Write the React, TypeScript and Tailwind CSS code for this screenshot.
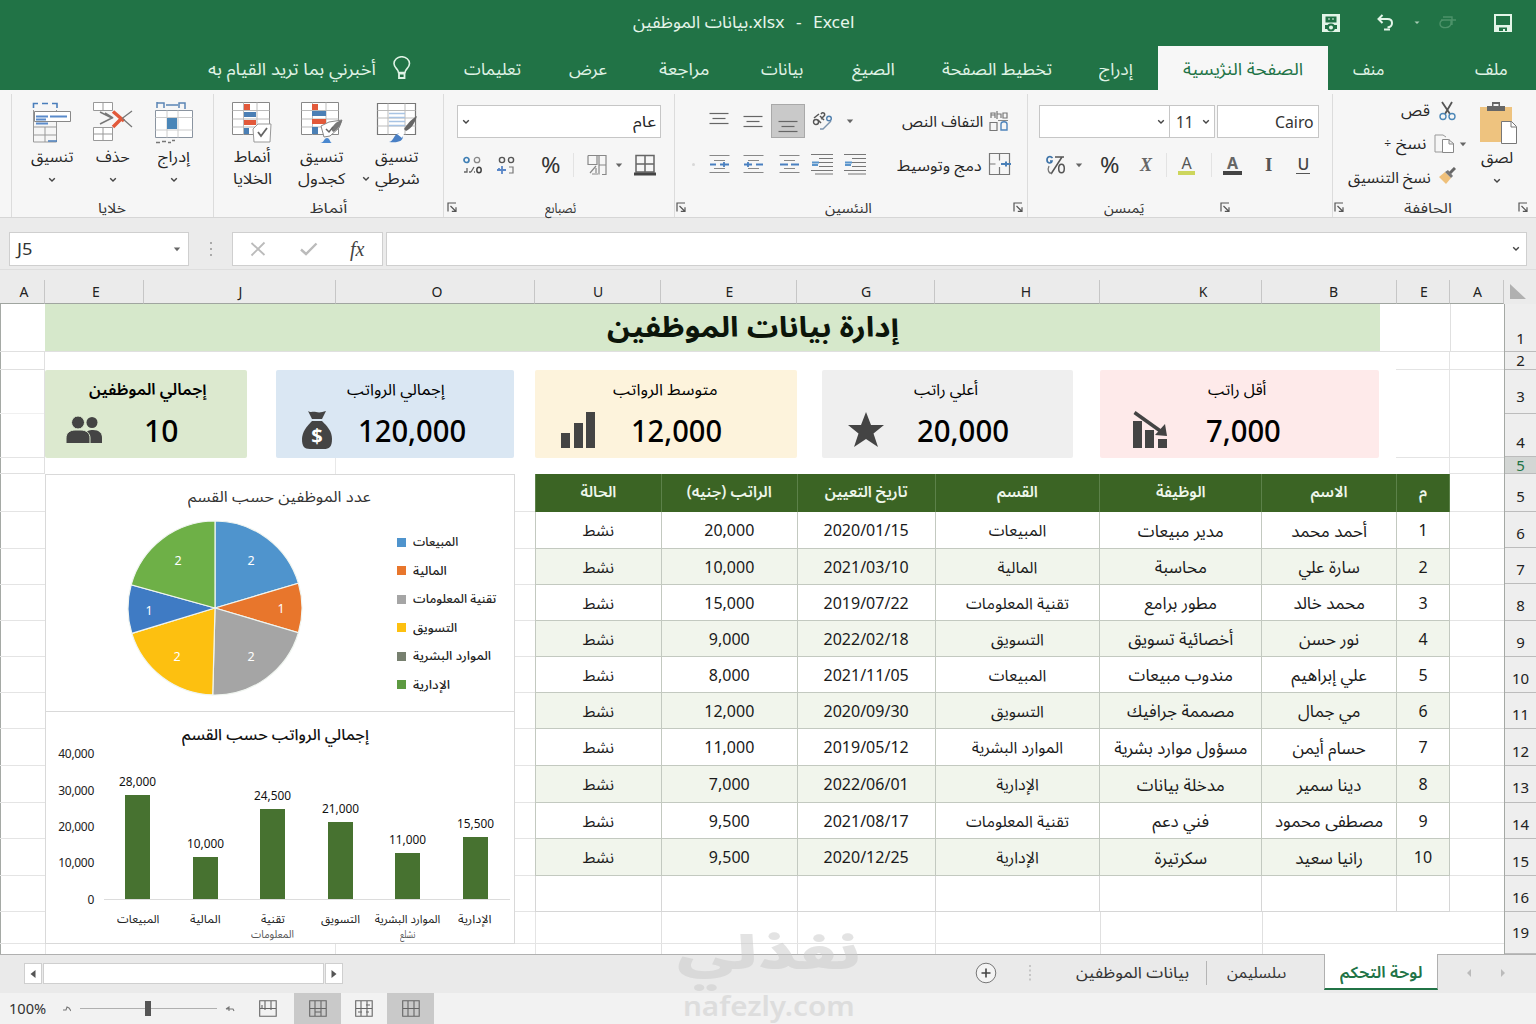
import { useLayoutEffect, useRef, useState } from 'react';
import type { ReactNode } from 'react';
import clsx from 'clsx';

// Stretches or squeezes a single line of text to the width of its box
const FitText = ({ children, className }: { children: ReactNode; className: string }) => {
  const box = useRef<HTMLDivElement>(null);
  const line = useRef<HTMLSpanElement>(null);
  const [scale, setScale] = useState(1);

  useLayoutEffect(() => {
    if (box.current && line.current) {
      setScale(box.current.clientWidth / line.current.offsetWidth);
    }
  }, [children]);

  return (
    <div ref={box} className={clsx('flex shrink-0 items-center whitespace-nowrap leading-none', className)}>
      <span ref={line} className="origin-left" style={{ transform: `scaleX(${scale})` }}>
        {children}
      </span>
    </div>
  );
};

const Svg = ({ w, h, children, className }: { w: number; h: number; children: ReactNode; className?: string }) => (
  <svg width={w} height={h} viewBox={`0 0 ${w} ${h}`} fill="none" className={clsx('shrink-0', className)}>
    {children}
  </svg>
);

const Chevron = ({ className }: { className?: string }) => (
  <Svg w={8} h={6} className={className}>
    <path d="M1.2 1.2 4 4 6.8 1.2" stroke="#444" strokeWidth="1.4" />
  </Svg>
);

const Caret = ({ className }: { className?: string }) => (
  <Svg w={8} h={5} className={className}>
    <path d="M.8.6h6.4L4 4.2z" fill="#666" />
  </Svg>
);

const Launcher = () => (
  <Svg w={11} h={11}>
    <path d="M1 9.5V1h8M3.5 4l5 5M9 5.2V9.4H4.8" stroke="#555" strokeWidth="1.2" />
  </Svg>
);

/* ---------- Title bar ---------- */

const TitleBar = () => (
  <div className="flex h-[46px] items-center">
    <div className="w-[633px]" />
    <FitText className="mt-[-4px] w-[222px] text-[17px] text-[#e6f5ea]">
      <span>بيانات الموظفين</span>
      <span>.xlsx</span>
      <span className="px-[11px]">-</span>
      <span>Excel</span>
    </FitText>
    <Svg w={20} h={20} className="ml-[466px]">
      <path d="M1 1h18v18H1z" fill="#e3f5e8" />
      <path d="M4.5 3.5h11v6h-11zM4 12h3v4H4zM13 12h3v4h-3z" fill="#217346" />
      <circle cx="10" cy="14.5" r="3" fill="#e3f5e8" stroke="#217346" strokeWidth="2" />
      <path d="M7 6h2M11 6h2" stroke="#e3f5e8" />
    </Svg>
    <Svg w={20} h={18} className="ml-[35px]">
      <path d="M6.5 1 2.5 5l4 4M3 5h8.500c6 0 6 8 0 8.500" stroke="#e3f5e8" strokeWidth="2" />
      <path d="M8 15.500h6" stroke="#e3f5e8" strokeWidth="2" />
    </Svg>
    <Svg w={6} h={4} className="ml-[18px]">
      <path d="M.5.5h5L3 3z" fill="#a9cdb5" />
    </Svg>
    <Svg w={18} h={16} className="ml-[18px]">
      <path d="M3 5h10v3c0 6-11 6-11 1 0-3 2-4 4-4M5 2h9v8M13 5h5" stroke="#4c9269" strokeWidth="1.4" />
    </Svg>
    <Svg w={20} h={20} className="ml-[37px]">
      <path d="M1 1h18v18H1z" fill="#e3f5e8" />
      <path d="M3 3h14v9H3zM6 14.5h8V18h-2v-2h-2v2H6z" fill="#217346" />
    </Svg>
  </div>
);

const TabBar = () => (
  <div className="flex h-[44px] items-center text-[17px] text-[#e0f3e6]">
    <FitText className="ml-[208px] w-[168px]">أخبرني بما تريد القيام به</FitText>
    <Svg w={20} h={24} className="ml-[16px]">
      <path d="M6.500 16.500c0-3.500-4.500-4.500-4.500-9a7.700 6.700 0 0 1 15.500 0c0 4.500-4.500 5.500-4.500 9z" stroke="#e0f3e6" strokeWidth="1.600" />
      <path d="M7 17.500h5.500v4.500H7z" stroke="#e0f3e6" strokeWidth="1.800" />
    </Svg>
    <FitText className="ml-[52px] w-[57px]">تعليمات</FitText>
    <FitText className="ml-[48px] w-[38px]">عرض</FitText>
    <FitText className="ml-[52px] w-[50px]">مراجعة</FitText>
    <FitText className="ml-[52px] w-[42px]">بيانات</FitText>
    <FitText className="ml-[49px] w-[43px]">الصيغ</FitText>
    <FitText className="ml-[47px] w-[110px]">تخطيط الصفحة</FitText>
    <FitText className="ml-[47px] w-[34px]">إدراج</FitText>
    <div className="ml-[25px] flex h-full w-[170px] items-center justify-center bg-[#f7f7f7] text-[#217346]">
      <FitText className="w-[120px]">الصفحة النژيسية</FitText>
    </div>
    <FitText className="ml-[25px] w-[31px]">منف</FitText>
    <FitText className="ml-[91px] w-[33px]">ملف</FitText>
  </div>
);

/* ---------- Ribbon ---------- */

const FormatCellsIcon = () => (
  <Svg w={40} h={42}>
    <path d="M1.500 9v32h23V9M1.500 26h23M1.500 34h23M13 26v15" stroke="#999" />
    <path d="M1.500 7V2.500H6M10 2.500h6M20 2.500h5V7M16 40h9" stroke="#4a7ebb" strokeWidth="1.600" />
    <path d="M2.500 10.500h36v10h-36z" fill="#fff" stroke="#888" />
    <path d="M4 15.500h12M4 18.500h10M4 22.500h12M18 15.500h17" stroke="#5b8bcb" strokeWidth="2" />
  </Svg>
);

const DeleteCellsIcon = () => (
  <Svg w={42} h={42}>
    <path d="M1.500 1.500h19v8h-19zM11 1.500v8M1.500 26.500h19v13h-19zM11 26.500v13M1.500 33h19" stroke="#999" fill="#fff" />
    <path d="m8 11 12 6-12 6M13 12l8 5" stroke="#777" strokeWidth="1.500" />
    <path d="M21 10.500 32 20M21 26l9-9" stroke="#e2593a" strokeWidth="3.500" />
    <path d="M30 17.500 40 10M31 18l9 8" stroke="#777" strokeWidth="1.300" />
  </Svg>
);

const InsertCellsIcon = () => (
  <Svg w={40} h={43}>
    <path d="M3 1v6M3 2h7v5M25 7V2h6v6M12 4h12" stroke="#5b85b5" strokeWidth="1.500" />
    <path d="M1.500 9.500h37v27h-37z" fill="#fff" stroke="#8a94a0" />
    <path d="M1.500 16.500h37M1.500 29h37M13 9.500v27M24 9.500v27" stroke="#ccc" />
    <path d="M13 17h10v11H13z" fill="#4a86b8" />
    <path d="M2 41.500h4M8 40.500h4M14 41.500h3M18 39.500h3" stroke="#777" strokeWidth="1.300" />
  </Svg>
);

const CellStylesIcon = () => (
  <Svg w={42} h={43}>
    <path d="M1.500 1.500h37v32h-37z" fill="#fff" stroke="#888" />
    <path d="M1.500 9.500h37M1.500 18h37M1.500 26h37M12.500 1.500v32M26 1.500v32" stroke="#bbb" />
    <path d="M13 3h6v6h-6zM13 19h12v5H13z" fill="#e2593a" />
    <path d="M13 11h12v5H13zM13 27h5v6h-5z" fill="#4a7fb5" />
    <path d="M22 28l5-5h13l-1 18H23z" fill="#fff" stroke="#999" />
    <path d="m27 31 3 4 6-8" stroke="#666" strokeWidth="1.800" />
  </Svg>
);

const TableFormatIcon = () => (
  <Svg w={43} h={43}>
    <path d="M1.500 1.500h37v32h-37z" fill="#fff" stroke="#888" />
    <path d="M1.500 9.500h37M1.500 18h37M1.500 26h37M12.500 1.500v32M26 1.500v32" stroke="#bbb" />
    <path d="M12 3h6v6h-6zM12 18h14v5H12z" fill="#e2593a" />
    <path d="M12 10h14v5H12zM12 26h6v7h-6z" fill="#4a7fb5" />
    <path d="m21 25 8-4 13-2-3 8-9 8-6 1z" fill="#fff" stroke="#888" />
    <path d="M42 19c-5 1-8 4-11 9l2 3c4-2 8-6 9-12z" fill="#777" />
    <path d="m26 28 3 3 4-5" stroke="#666" strokeWidth="1.500" />
    <path d="M20 42c4 0 4-5 7-5s3 5 5 5z" fill="#4a88d0" />
  </Svg>
);

const ConditionalIcon = () => (
  <Svg w={42} h={43}>
    <path d="M1.500 2.500h38v31h-38z" fill="#fff" stroke="#777" strokeWidth="1.200" />
    <path d="M1.500 9.500h38M1.500 17h38M1.500 25h38M12 2.500v31M29 2.500v31" stroke="#bbb" />
    <path d="M13 12.500h16M13 16.500h16M13 20.500h16M13 24.500h16" stroke="#a8c4e4" strokeWidth="1.500" />
    <path d="M41 15c-7 4-10 9-13 13l2 2c5-2 9-8 11-15z" fill="#666" />
    <path d="M13 41c5-1 4-7 10-9l4 3c0 5-4 7-14 6z" fill="#4a80c5" />
    <path d="m21 33 5-2 2 2-2 4z" fill="#fff" />
  </Svg>
);

const BigButton = ({ icon, className, lines, caret }: { icon: ReactNode; className: string; lines: ReactNode; caret?: boolean }) => (
  <div className={clsx('flex flex-col items-center', className)}>
    <div className="flex h-[43px] items-start">{icon}</div>
    <div className="flex flex-col items-center pt-[2px] text-[15.500px] text-[#262626] [&>*]:h-[22px]">{lines}</div>
    {caret && <Chevron className="mt-[9px]" />}
  </div>
);

// Bottom strip of a ribbon group: caption in the middle, launcher where there is one
const GroupFooter = ({ children }: { children: ReactNode }) => (
  <div className="flex h-[20px] items-center pt-px text-[14px] text-[#333]">{children}</div>
);

const HLines = ({ y, widths }: { y: number[]; widths: number[] }) => (
  <Svg w={20} h={24}>
    {y.map((top, i) => (
      <path key={top} d={`M${(20 - widths[i]) / 2} ${top + 0.5}h${widths[i]}`} stroke="#666" strokeWidth="1.200" />
    ))}
  </Svg>
);

const IndentIcon = ({ kind }: { kind: 'in' | 'out' | 'mid' }) => (
  <Svg w={21} h={20}>
    <path d="M.5 1.500h20M5 6.500h11M5 14.500h11M.5 18.500h20" stroke="#888" strokeWidth="1.200" />
    {kind === 'in' && <path d="M1 10.500h6M11 10.500h9M15 8v5" stroke="#4a80c0" strokeWidth="1.800" />}
    {kind === 'out' && <path d="M1 10.500h8M13 10.500h7M5 8v5" stroke="#4a80c0" strokeWidth="1.800" />}
    {kind === 'mid' && <path d="M1 10.500h8M12 10.500h8" stroke="#4a80c0" strokeWidth="1.800" />}
  </Svg>
);

const ParagraphIcon = () => (
  <Svg w={22} h={22}>
    <path d="M0 1.500h22M8 5.500h14M8 9.500h14M8 13.500h14M0 17.500h22M4 21h18" stroke="#777" strokeWidth="1.200" />
    <path d="M1 9.500h7M1 12h6" stroke="#5b95cc" strokeWidth="2" />
  </Svg>
);

const Divider = ({ className }: { className?: string }) => <div className={clsx('h-[24px] w-px bg-[#e3e3e3]', className)} />;

const CellsGroup = () => (
  <div className="ml-[11px] flex w-[202px] flex-col border-l border-[#dcdcdc]">
    <div className="flex h-[103px] pt-[7px] pl-[9px]">
      <BigButton icon={<FormatCellsIcon />} className="w-[61px]" caret lines={<FitText className="w-[42px]">تنسيق</FitText>} />
      <BigButton icon={<DeleteCellsIcon />} className="w-[61px]" caret lines={<FitText className="w-[34px]">حذف</FitText>} />
      <BigButton icon={<InsertCellsIcon />} className="w-[61px]" caret lines={<FitText className="w-[32px]">إدراج</FitText>} />
    </div>
    <GroupFooter>
      <FitText className="ml-[86px] w-[28px]">خلايا</FitText>
    </GroupFooter>
  </div>
);

const StylesGroup = () => (
  <div className="flex w-[230px] flex-col border-l border-[#dcdcdc]">
    <div className="flex h-[103px] pt-[7px] pl-[3px]">
      <BigButton
        icon={<CellStylesIcon />}
        className="w-[70px]"
        lines={
          <>
            <FitText className="w-[37px]">أنماط</FitText>
            <FitText className="w-[39px]">الخلايا</FitText>
          </>
        }
      />
      <BigButton
        icon={<TableFormatIcon />}
        className="w-[69px]"
        lines={
          <>
            <FitText className="w-[43px]">تنسيق</FitText>
            <FitText className="w-[47px]">كجدول</FitText>
          </>
        }
      />
      <BigButton
        icon={<ConditionalIcon />}
        className="w-[81px]"
        lines={
          <>
            <FitText className="w-[43px]">تنسيق</FitText>
            <div className="-ml-[12px] flex items-center gap-[5px]">
              <Chevron />
              <FitText className="w-[45px]">شرطي</FitText>
            </div>
          </>
        }
      />
    </div>
    <GroupFooter>
      <FitText className="ml-[96px] w-[37px]">أنماظ</FitText>
    </GroupFooter>
  </div>
);

const NumberGroup = () => (
  <div className="flex w-[231px] flex-col border-l border-[#dcdcdc]">
    <div className="flex h-[103px] flex-col pt-[11px] pl-[13px]">
      <div className="flex h-[33px] w-[204px] items-center justify-between border border-[#c6c6c6] bg-white px-[4px]">
        <Chevron />
        <FitText className="w-[23px] text-[15px]">عام</FitText>
      </div>
      <div className="mt-[15px] flex h-[24px] items-center">
        <Svg w={20} h={20} className="ml-[6px]">
          <circle cx="3.500" cy="5" r="2.500" stroke="#3f7fb5" strokeWidth="1.700" />
          <circle cx="14" cy="5" r="2.700" stroke="#888" strokeWidth="1.300" />
          <path d="M1 17h3V13M6 17h2M8 17l3-5M11 17h1" stroke="#666" strokeWidth="1.300" />
          <ellipse cx="16" cy="15" rx="2.200" ry="2.800" stroke="#444" strokeWidth="1.500" />
        </Svg>
        <Svg w={20} h={20} className="ml-[13px]">
          <circle cx="6" cy="5" r="2.600" stroke="#555" strokeWidth="1.400" />
          <circle cx="15" cy="5" r="2.600" stroke="#555" strokeWidth="1.400" />
          <path d="M1 15h9M6 11v8M3 13v3" stroke="#5a87c8" strokeWidth="1.800" />
          <path d="M13 12h4v6h-4" stroke="#777" strokeWidth="1.200" />
        </Svg>
        <FitText className="ml-[25px] w-[19px] text-[21px] text-[#333]">%</FitText>
        <Divider className="ml-[13px]" />
        <Svg w={20} h={22} className="ml-[13px]">
          <path d="M1 1.500h18v19h-4M1 1.500v9h9v-9M12 1.500v19M12 11h7M9 12 3 19M9 19v-5M5 20h6" stroke="#888" strokeWidth="1.200" />
        </Svg>
        <Caret className="ml-[8px]" />
        <Svg w={22} h={22} className="ml-[11px]">
          <path d="M2 1.500h18V18H2zM11 1.500V18M2 10h18" stroke="#666" strokeWidth="1.500" />
          <path d="M0 20h22" stroke="#444" strokeWidth="3" />
        </Svg>
      </div>
    </div>
    <GroupFooter>
      <div className="ml-[3px]">
        <Launcher />
      </div>
      <FitText className="ml-[87px] w-[31px]">ئصباىع</FitText>
    </GroupFooter>
  </div>
);

const AlignmentGroup = () => (
  <div className="flex w-[353px] flex-col border-l border-[#dcdcdc]">
    <div className="flex h-[103px] flex-col pt-[10px]">
      <div className="flex h-[34px] items-center">
        <div className="ml-[34px]">
          <HLines y={[4, 9, 14]} widths={[19, 13, 19]} />
        </div>
        <div className="mt-[6px] ml-[14px]">
          <HLines y={[4, 9, 14]} widths={[19, 13, 19]} />
        </div>
        <div className="ml-[8px] flex h-[34px] w-[34px] items-end justify-center border border-[#a9a9a9] bg-[#c9c9c9]">
          <HLines y={[8, 13, 18]} widths={[19, 13, 19]} />
        </div>
        <Svg w={22} h={22} className="ml-[7px]">
          <circle cx="4" cy="12" r="2.500" stroke="#555" strokeWidth="1.400" />
          <path d="M6 10l3 3M8 6l4 4M9 4c2-3 5 0 3 2L9 9M2 8l5-4" stroke="#555" strokeWidth="1.500" />
          <circle cx="17" cy="8.500" r="2.300" stroke="#4f7fae" strokeWidth="1.400" />
          <path d="M19 11 11 19H8" stroke="#7b93ad" strokeWidth="1.400" />
        </Svg>
        <Caret className="ml-[12px]" />
        <FitText className="ml-[48px] w-[81px] pt-px text-[15px]">التفاف النص</FitText>
        <Svg w={20} h={22} className="ml-[6px]">
          <path d="M2 8V3h4v5M2 5h4M8 9V1M8 4h4v4M14 3h4v5h-4zM1 12.500h7v8H1z" stroke="#777" strokeWidth="1.200" />
          <path d="M12 20v-6c0-3 6-3 6 0v6z" stroke="#4f84bb" strokeWidth="1.400" />
          <path d="M9 10.500h10" stroke="#888" />
        </Svg>
      </div>
      <div className="mt-[11px] flex h-[30px] items-center">
        <div className="ml-[17px] size-[3px] rounded-full bg-[#d8d8d8]" />
        <div className="ml-[14px] flex gap-[13px]">
          <IndentIcon kind="in" />
          <IndentIcon kind="out" />
        </div>
        <div className="ml-[15px]">
          <IndentIcon kind="mid" />
        </div>
        <div className="ml-[11px] flex gap-[11px]">
          <ParagraphIcon />
          <ParagraphIcon />
        </div>
        <FitText className="ml-[31px] w-[85px] pt-[2px] text-[15px]">دمج وتوسيط</FitText>
        <Svg w={23} h={24} className="ml-[6px]">
          <path d="M1.500 1.500h20v21h-20zM11.500 1.500v7M11.500 15v7M1.500 12h6" stroke="#777" strokeWidth="1.200" />
          <path d="M13 12h10M18 9.500v5" stroke="#4a80b8" strokeWidth="2" />
        </Svg>
      </div>
    </div>
    <GroupFooter>
      <div className="ml-[1px]">
        <Launcher />
      </div>
      <FitText className="ml-[138px] w-[47px]">النئسين</FitText>
      <div className="ml-[141px]">
        <Launcher />
      </div>
    </GroupFooter>
  </div>
);

const FontGroup = () => (
  <div className="flex w-[305px] flex-col border-l border-[#dcdcdc]">
    <div className="flex h-[103px] flex-col pt-[11px] pl-[11px]">
      <div className="flex h-[33px] text-[16px] text-[#333]">
        <div className="flex w-[131px] items-center justify-end border border-[#c6c6c6] bg-white pr-[4px]">
          <Chevron />
        </div>
        <div className="flex w-[45px] items-center justify-between border border-l-0 border-[#c6c6c6] bg-white pr-[4px] pl-[6px]">
          <FitText className="w-[17px]">11</FitText>
          <Chevron />
        </div>
        <div className="ml-[2px] flex w-[102px] items-center justify-end border border-[#c6c6c6] bg-white pr-[4px]">
          <FitText className="w-[39px] text-[17px]">Cairo</FitText>
        </div>
      </div>
      <div className="mt-[15px] flex h-[24px] items-center">
        <Svg w={20} h={20} className="ml-[7px]">
          <path d="M6.500 3C4.500.5 1 1.500 1 5s4.500 4 5 1H4" stroke="#3f74a8" strokeWidth="1.700" />
          <path d="M16 2 5 19M9 2h9" stroke="#555" strokeWidth="1.500" />
          <ellipse cx="15.500" cy="13.500" rx="2.800" ry="4.300" stroke="#555" strokeWidth="1.500" />
          <path d="M3 11c-2 4 0 8 3 7" stroke="#777" strokeWidth="1.300" />
        </Svg>
        <Caret className="ml-[9px]" />
        <FitText className="ml-[17px] w-[19px] text-[21px] text-[#333]">%</FitText>
        <FitText className="ml-[21px] w-[12px] font-['Liberation_Serif'] text-[18px] font-bold text-[#666] italic">X</FitText>
        <Divider className="ml-[14px]" />
        <div className="ml-[11px] flex w-[17px] flex-col items-center border-b-4 border-[#cdd65c] text-[16px] leading-[16px] text-[#555]">A</div>
        <Divider className="ml-[16px]" />
        <div className="ml-[11px] flex w-[19px] flex-col items-center border-b-4 border-[#444] text-[16px] leading-[16px] font-bold text-[#666]">A</div>
        <div className="ml-[23px] font-['Liberation_Serif'] text-[19px] font-bold text-[#555]">I</div>
        <div className="ml-[24px] border-b border-[#555] px-[1px] text-[16px] leading-[17px] font-medium text-[#444]">U</div>
      </div>
    </div>
    <GroupFooter>
      <FitText className="ml-[76px] w-[40px]">يَمىسن</FitText>
      <div className="ml-[76px]">
        <Launcher />
      </div>
    </GroupFooter>
  </div>
);

const ClipboardGroup = () => (
  <div className="flex w-[204px] flex-col border-l border-[#dcdcdc]">
    <div className="flex h-[103px]">
      <div className="flex w-[134px] flex-col text-[15.500px] text-[#262626]">
        <div className="mt-[5px] flex h-[24px] items-center justify-end">
          <FitText className="w-[29px]">قص</FitText>
          <Svg w={17} h={20} className="mr-[11px] ml-[9px]">
            <path d="M3 1l8 12M13 1 6 13" stroke="#555" strokeWidth="1.800" />
            <circle cx="4" cy="15.500" r="3" stroke="#4d88b8" strokeWidth="1.400" />
            <circle cx="13" cy="15.500" r="3" stroke="#4d88b8" strokeWidth="1.400" />
          </Svg>
        </div>
        <div className="mt-[9px] flex h-[24px] items-center justify-end">
          <span className="mr-[5px] text-[12px]">÷</span>
          <FitText className="w-[30px]">نسخ</FitText>
          <Svg w={21} h={20} className="ml-[8px]">
            <path d="M9 18H1V1h8l3 2" stroke="#999" />
            <path d="M8.500 5.500h6l5 4v9h-11zM15 5v5h5" fill="#fff" stroke="#888" />
          </Svg>
          <Caret className="ml-[4px]" />
        </div>
        <div className="mt-[10px] flex h-[24px] items-center justify-end">
          <FitText className="w-[83px]">نسخ التنسيق</FitText>
          <Svg w={18} h={18} className="mr-[11px] ml-[7px] mb-[4px]">
            <path d="m1 10 6-5 6 6-5 6z" fill="#efc07a" />
            <path d="m7 5 3-2 5 6-2 2z" fill="#777" />
            <path d="m12 6 5-5" stroke="#666" strokeWidth="3" />
          </Svg>
        </div>
      </div>
      <div className="ml-[9px] flex flex-col items-center pt-[8px]">
        <Svg w={39} h={43} className="ml-[3px]">
          <path d="M1 5h32v35H1z" fill="#eec37f" />
          <path d="M8 4h5V0h8v4h5v5H8zM14.500 2v2h5V2z" fill="#666" />
          <path d="M22.500 19.500h10l5 5v17h-15z" fill="#fff" stroke="#777" />
          <path d="M32 19v6h5" stroke="#777" />
        </Svg>
        <FitText className="mt-[5px] w-[32px] text-[15.500px]">لصق</FitText>
        <Chevron className="mt-[12px]" />
      </div>
    </div>
    <GroupFooter>
      <div className="ml-[1px]">
        <Launcher />
      </div>
      <FitText className="ml-[59px] w-[48px]">الحاففة</FitText>
      <div className="ml-[66px]">
        <Launcher />
      </div>
    </GroupFooter>
  </div>
);

const Ribbon = () => (
  <div className="flex h-[128px] border-b border-[#d6d6d6] bg-[#f6f6f6] pt-[4px] text-[#262626]">
    <CellsGroup />
    <StylesGroup />
    <NumberGroup />
    <AlignmentGroup />
    <FontGroup />
    <ClipboardGroup />
  </div>
);

/* ---------- Formula bar ---------- */

const FormulaBar = () => (
  <div className="flex h-[52px] items-start border-b border-[#dedede] bg-[#ebebeb] pt-[14px]">
    <div className="ml-[9px] flex h-[34px] w-[180px] items-center justify-between border border-[#cfcfcf] bg-white px-[7px] text-[16px] text-[#333]">
      <FitText className="w-[16px]">J5</FitText>
      <Caret />
    </div>
    <Svg w={4} h={16} className="mt-[9px] ml-[20px]">
      <path d="M2 1v2M2 7v2M2 13v2" stroke="#aaa" strokeWidth="2" />
    </Svg>
    <div className="ml-[19px] flex h-[34px] w-[151px] items-center border border-[#cfcfcf] bg-white">
      <Svg w={16} h={16} className="ml-[17px]">
        <path d="m1.500 2 13 12M14.500 1.500l-13 13" stroke="#bbb" strokeWidth="1.800" />
      </Svg>
      <Svg w={18} h={14} className="ml-[34px]">
        <path d="M1 7.500 6 12 16.500 1.500" stroke="#bbb" strokeWidth="2.400" />
      </Svg>
      <span className="ml-[32px] font-['Liberation_Serif'] text-[20px] leading-none text-[#444] italic">fx</span>
    </div>
    <div className="ml-[3px] flex h-[34px] w-[1141px] items-center justify-end border border-[#cfcfcf] bg-white pr-[6px]">
      <Chevron />
    </div>
  </div>
);

const COLUMNS = [
  { name: 'A', cls: 'w-[45px] pl-[4px]' },
  { name: 'E', cls: 'w-[99px] pl-[4px]' },
  { name: 'J', cls: 'w-[192px] pl-[2px]' },
  { name: 'O', cls: 'w-[199px] pl-[4px]' },
  { name: 'U', cls: 'w-[126px] pl-[1px]' },
  { name: 'E', cls: 'w-[136px] pl-[2px]' },
  { name: 'G', cls: 'w-[138px] pl-[1px]' },
  { name: 'H', cls: 'w-[165px] pl-[18px]' },
  { name: 'K', cls: 'w-[162px] pl-[45px]' },
  { name: 'B', cls: 'w-[135px] pl-[9px]' },
  { name: 'E', cls: 'w-[53px] pl-[2px]' },
  { name: 'A', cls: 'w-[54px] pl-[2px]' },
];

const ColumnHeader = () => (
  <div className="flex h-[34px] items-end bg-[#ebebeb] text-[14px] text-[#222]">
    {COLUMNS.map((col, i) => (
      <div key={i} className={clsx('flex h-[24px] items-center justify-center border-r border-b border-r-[#c6c6c6] border-b-[#a0a5a0]', col.cls)}>
        {col.name}
      </div>
    ))}
    <Svg w={17} h={16} className="mb-[4px] ml-[6px]">
      <path d="M0 0v15h16z" fill="#b0b0b0" />
    </Svg>
  </div>
);

/* ---------- Sheet ---------- */

const ROW_HEADERS = [
  { n: '1', cls: 'h-[48px] pt-[21px]' },
  { n: '2', cls: 'h-[18px]' },
  { n: '3', cls: 'h-[44px] pt-[10px]' },
  { n: '4', cls: 'h-[43px] pt-[14px]' },
  { n: '5', cls: 'h-[17px] bg-[#d3d6d4] text-[#217346]' },
  { n: '5', cls: 'h-[38px] pt-[8px]' },
  { n: '6', cls: 'h-[36px] pt-[8px]' },
  { n: '7', cls: 'h-[36px] pt-[8px]' },
  { n: '8', cls: 'h-[37px] pt-[7px]' },
  { n: '9', cls: 'h-[36px] pt-[8px]' },
  { n: '10', cls: 'h-[36px] pt-[8px]' },
  { n: '11', cls: 'h-[36px] pt-[8px]' },
  { n: '12', cls: 'h-[37px] pt-[8px]' },
  { n: '13', cls: 'h-[37px] pt-[7px]' },
  { n: '14', cls: 'h-[36px] pt-[8px]' },
  { n: '15', cls: 'h-[37px] pt-[8px]' },
  { n: '16', cls: 'h-[36px] pt-[8px]' },
  { n: '19', cls: 'h-[42px]' },
];

const BODY_ROWS = [
  'h-[38px]',
  'h-[37px]',
  'h-[36px]',
  'h-[36px]',
  'h-[36px]',
  'h-[36px]',
  'h-[36px]',
  'h-[37px]',
  'h-[37px]',
  'h-[36px]',
  'h-[37px]',
  'h-[36px]',
  'h-[32px]',
];

const GridStrip = ({ className }: { className: string }) => (
  <div className={clsx('flex flex-col', className)}>
    {BODY_ROWS.map((h, i) => (
      <div key={i} className={clsx('border-b border-[#e4e4e4]', h)} />
    ))}
  </div>
);

const KPIS = [
  {
    label: 'إجمالي الموظفين',
    labelCls: 'w-[118px] ml-[44px] font-semibold',
    value: '10',
    valueCls: 'w-[34px] ml-[41px]',
    box: 'w-[202px] bg-[#dce9cf]',
    iconCls: 'ml-[21px]',
    icon: (
      <Svg w={37} h={30}>
        <circle cx="26" cy="7.500" r="5.500" fill="#444" />
        <path d="M19 28V20c1-4 4-5 8-5 6 0 9 3 9 8v5z" fill="#444" />
        <circle cx="12" cy="7.500" r="6.500" fill="#444" stroke="#dce9cf" />
        <path d="M0 28.500v-5.500c0-5 4-8 9-8h6c5 0 9 3 9 8v5.500z" fill="#444" stroke="#dce9cf" />
      </Svg>
    ),
  },
  {
    label: 'إجمالي الرواتب',
    labelCls: 'w-[98px] ml-[71px]',
    value: '120,000',
    valueCls: 'w-[108px] ml-[25px]',
    box: 'ml-[29px] w-[238px] bg-[#dae7f3]',
    iconCls: 'ml-[25px]',
    icon: (
      <Svg w={32} h={38}>
        <path d="M7 0c3 2 5 0 8 1 4 1 6 0 10-1l-4 8H11z" fill="#444" />
        <path d="M11 10h10c5 5 10 10 10 18s-3 10-8 10H9c-6 0-8-3-8-10S6 15 11 10z" fill="#444" />
        <text x="16" y="32" fill="#fff" fontSize="20" fontWeight="700" textAnchor="middle">
          $
        </text>
      </Svg>
    ),
  },
  {
    label: 'متوسط الرواتب',
    labelCls: 'w-[104px] ml-[78px]',
    value: '12,000',
    valueCls: 'w-[91px] ml-[35px]',
    box: 'ml-[21px] w-[262px] bg-[#fdf3dc]',
    iconCls: 'ml-[26px]',
    icon: (
      <Svg w={35} h={36}>
        <path d="M0 21h9v15H0zM13 11h9v25h-9zM25 0h9v36h-9z" fill="#444" />
      </Svg>
    ),
  },
  {
    label: 'أعلي راتب',
    labelCls: 'w-[64px] ml-[92px]',
    value: '20,000',
    valueCls: 'w-[92px] ml-[33px]',
    box: 'ml-[25px] w-[251px] bg-[#efefef]',
    iconCls: 'ml-[26px]',
    icon: (
      <Svg w={36} h={36}>
        <path d="m18 0 5 13h13L25.500 21.500 30 35l-12-8-12 8 4.500-13.500L0 13h13z" fill="#444" />
      </Svg>
    ),
  },
  {
    label: 'أقل راتب',
    labelCls: 'w-[58px] ml-[108px]',
    value: '7,000',
    valueCls: 'w-[75px] ml-[38px]',
    box: 'ml-[27px] w-[279px] bg-[#feeaea]',
    iconCls: 'ml-[32px]',
    icon: (
      <Svg w={36} h={37}>
        <path d="M1 10h9v27H1zM13 19h9v18h-9zM26 28h9v9h-9z" fill="#444" />
        <path d="m2.500 1.500 28 20" stroke="#444" strokeWidth="3.500" />
        <path d="m33 13 2 12-12-1z" fill="#444" />
      </Svg>
    ),
  },
];

const KpiRow = () => (
  <div className="flex h-[88px]">
    <div className="flex w-[45px] flex-col border-r border-[#e0e0e0]">
      <div className="h-[44px] border-b border-[#f0f0f0]" />
      <div className="h-[44px] border-b border-[#e4e4e4]" />
    </div>
    {KPIS.map((kpi) => (
      <div key={kpi.label} className={clsx('flex flex-col rounded-[2px] text-black', kpi.box)}>
        <FitText className={clsx('mt-[8px] h-[22px] text-[16px]', kpi.labelCls)}>{kpi.label}</FitText>
        <div className="mt-[8px] flex h-[43px] items-center">
          <div className={kpi.iconCls}>{kpi.icon}</div>
          <FitText className={clsx('pt-[2px] text-[30px] font-medium', kpi.valueCls)}>{kpi.value}</FitText>
        </div>
      </div>
    ))}
    <div className="ml-[17px] w-[54px] border-r border-b border-[#e4e4e4]" />
    <div className="w-[54px] border-b border-[#e4e4e4]" />
  </div>
);

/* ---------- Charts ---------- */

const SLICES = [
  { from: 0, to: 73.5, color: '#4f94cd', n: 2, x: 205, y: 90 },
  { from: 73.5, to: 106.5, color: '#e8762c', n: 1, x: 235, y: 138 },
  { from: 106.5, to: 181.5, color: '#a5a5a5', n: 2, x: 205, y: 186 },
  { from: 181.5, to: 253, color: '#fdc010', n: 2, x: 131, y: 186 },
  { from: 253, to: 285.5, color: '#3f7bc4', n: 1, x: 103, y: 140 },
  { from: 285.5, to: 360, color: '#6eb047', n: 2, x: 132, y: 90 },
];

const CX = 169;
const CY = 133;
const R = 87;

const point = (deg: number) => {
  const a = ((deg - 90) * Math.PI) / 180;
  return `${CX + R * Math.cos(a)} ${CY + R * Math.sin(a)}`;
};

const LEGEND = [
  { name: 'المبيعات', sw: 'bg-[#4f94cd]', cls: 'w-[45px]' },
  { name: 'المالية', sw: 'bg-[#e8762c]', cls: 'w-[34px]' },
  { name: 'تقنية المعلومات', sw: 'bg-[#a5a5a5]', cls: 'w-[83px]' },
  { name: 'التسويق', sw: 'bg-[#fdc010]', cls: 'w-[44px]' },
  { name: 'الموارد البشرية', sw: 'bg-[#77806f]', cls: 'w-[78px]' },
  { name: 'الإدارية', sw: 'bg-[#5d9a41]', cls: 'w-[37px]' },
];

const PieChart = () => (
  <div className="relative h-[237px] border-b border-[#d9d9d9]">
    <Svg w={300} h={236}>
      {SLICES.map((s) => (
        <path key={s.from} d={`M${CX} ${CY}L${point(s.from)}A${R} ${R} 0 0 1 ${point(s.to)}Z`} fill={s.color} stroke="#f0f5f0" strokeWidth="1.200" />
      ))}
      {SLICES.map((s) => (
        <text key={s.from} x={s.x} y={s.y} fill="#fff" fontSize="12.500" textAnchor="middle">
          {s.n}
        </text>
      ))}
    </Svg>
    <FitText className="absolute top-[10px] left-[142px] h-[22px] w-[183px] text-[15px] text-[#333]">عدد الموظفين حسب القسم</FitText>
    <div className="absolute top-[53px] left-[351px] flex flex-col">
      {LEGEND.map((item) => (
        <div key={item.name} className="flex h-[28.500px] items-center gap-[7px]">
          <div className={clsx('size-[9px]', item.sw)} />
          <FitText className={clsx('text-[12px] font-medium text-[#222]', item.cls)}>{item.name}</FitText>
        </div>
      ))}
    </div>
  </div>
);

const BARS = [
  { name: 'المبيعات', value: '28,000', bar: 'h-[104px]', cls: 'w-[42px]' },
  { name: 'المالية', value: '10,000', bar: 'h-[42px]', cls: 'w-[31px]' },
  { name: 'تقنية', value: '24,500', bar: 'h-[90px]', cls: 'w-[24px]', second: 'المعلومات', secondCls: 'w-[43px]' },
  { name: 'التسويق', value: '21,000', bar: 'h-[77px]', cls: 'w-[39px]' },
  { name: 'الموارد البشرية', value: '11,000', bar: 'h-[46px]', cls: 'w-[66px]', second: 'نشلع', secondCls: 'w-[15px]' },
  { name: 'الإدارية', value: '15,500', bar: 'h-[62px]', cls: 'w-[34px]' },
];

const TICKS = ['40,000', '30,000', '20,000', '10,000', '0'];

const BarChart = () => (
  <div className="flex h-[232px] flex-col">
    <FitText className="mt-[12px] ml-[136px] h-[22px] w-[187px] text-[15.500px] font-medium text-[#111]">إجمالي الرواتب حسب القسم</FitText>
    <div className="mt-[-10px] flex">
      <div className="flex w-[48px] flex-col items-end text-[12px] text-[#222]">
        {TICKS.map((t) => (
          <div key={t} className="flex h-[36.400px] items-center leading-none tracking-tight">
            {t}
          </div>
        ))}
      </div>
      <div className="ml-[10px] flex flex-col">
        <div className="flex h-[164px] w-[406px] items-end border-b border-[#dcdcdc]">
          {BARS.map((b) => (
            <div key={b.name} className="flex w-[67.500px] flex-col items-center text-[12.500px] text-[#111]">
              <FitText className="mb-[7px] w-[37px]">{b.value}</FitText>
              <div className={clsx('w-[25px] bg-[#477230]', b.bar)} />
            </div>
          ))}
        </div>
        <div className="flex pt-[10px]">
          {BARS.map((b) => (
            <div key={b.name} className="flex w-[67.500px] flex-col items-center text-[11.500px] text-[#222]">
              <FitText className={clsx('h-[17px]', b.cls)}>{b.name}</FitText>
              {b.second && <FitText className={clsx('h-[15px] text-[10.500px] text-[#555]', b.secondCls)}>{b.second}</FitText>}
            </div>
          ))}
        </div>
      </div>
    </div>
  </div>
);

/* ---------- Employees table ---------- */

const TABLE_COLS = ['w-[126px]', 'w-[136px]', 'w-[138px]', 'w-[165px]', 'w-[162px]', 'w-[135px]', 'w-[53px]'];

const HEAD = ['الحالة', 'الراتب (جنيه)', 'تاريخ التعيين', 'القسم', 'الوظيفة', 'الاسم', 'م'];

const EMPLOYEES = [
  ['نشط', '20,000', '2020/01/15', 'المبيعات', 'مدير مبيعات', 'أحمد محمد', '1'],
  ['نشط', '10,000', '2021/03/10', 'المالية', 'محاسبة', 'سارة علي', '2'],
  ['نشط', '15,000', '2019/07/22', 'تقنية المعلومات', 'مطور برامع', 'محمد خالد', '3'],
  ['نشط', '9,000', '2022/02/18', 'التسويق', 'أخصائية تسويق', 'نور حسن', '4'],
  ['نشط', '8,000', '2021/11/05', 'المبيعات', 'مندوب مبيعات', 'علي إبراهيم', '5'],
  ['نشط', '12,000', '2020/09/30', 'التسويق', 'مصممة جرافيك', 'مي جمال', '6'],
  ['نشط', '11,000', '2019/05/12', 'الموارد البشرية', 'مسؤول موارد بشرية', 'حسام أيمن', '7'],
  ['نشط', '7,000', '2022/06/01', 'الإدارية', 'مدخلة بيانات', 'دينا سمير', '8'],
  ['نشط', '9,500', '2021/08/17', 'تقنية المعلومات', 'فني دعم', 'مصطفى محمود', '9'],
  ['نشط', '9,500', '2020/12/25', 'الإدارية', 'سكرتيرة', 'رانيا سعيد', '10'],
];

const EmployeesTable = () => (
  <div className="flex w-[915px] flex-col">
    <div className="flex h-[38px] border-l border-[#5c8149] bg-[#3b6424]">
      {HEAD.map((h, i) => (
        <div
          key={h}
          className={clsx('flex items-center justify-center border-r border-[#5c8149] pb-[2px] text-[15.500px] leading-none font-semibold text-[#eef6ea]', TABLE_COLS[i])}
        >
          {h}
        </div>
      ))}
    </div>
    {EMPLOYEES.map((row, r) => (
      <div key={r} className={clsx('flex border-b border-l border-[#c3c9c0]', BODY_ROWS[r + 1], r % 2 === 1 ? 'bg-[#f1f5ec]' : 'bg-white')}>
        {row.map((cell, i) => (
          <div
            key={i}
            className={clsx(
              'flex items-center justify-center border-r border-[#c3c9c0] leading-none whitespace-nowrap text-[#1a1a1a]',
              i === 4 || i === 5 ? 'text-[17px]' : 'text-[16px]',
              TABLE_COLS[i],
            )}
          >
            {cell}
          </div>
        ))}
      </div>
    ))}
    <div className="flex h-[36px] border-b border-l border-[#d6d6d6]">
      {TABLE_COLS.map((w) => (
        <div key={w} className={clsx('border-r border-[#d6d6d6]', w)} />
      ))}
    </div>
    <div className="flex h-[32px] border-b border-l border-[#e4e4e4]">
      {TABLE_COLS.slice(0, 5).map((w) => (
        <div key={w} className={clsx('border-r border-[#e0e0e0]', w)} />
      ))}
    </div>
    <div className="flex flex-1 border-l border-[#e4e4e4]">
      {TABLE_COLS.slice(0, 5).map((w) => (
        <div key={w} className={clsx('border-r border-[#e0e0e0]', w)} />
      ))}
    </div>
  </div>
);

const Sheet = () => (
  <div className="flex h-[650px] bg-white">
    <div className="flex w-[1505px] flex-col border-r border-l border-[#a5a9a5]">
      {/* Banner */}
      <div className="-ml-px flex h-[48px] border-b border-[#e0e0e0]">
        <div className="w-[45px]" />
        <div className="flex w-[1335px] bg-[#d6e8cb]">
          <FitText className="ml-[562px] h-[44px] w-[292px] text-[28px] font-bold text-[#0c150a]">إدارة بيانات الموظفين</FitText>
        </div>
        <div className="w-[71px] border-r border-[#e0e0e0]" />
      </div>
      <div className="-ml-px flex h-[18px]">
        <div className="w-[45px] border-r border-b border-[#e0e0e0]" />
        <div className="w-[1352px]" />
        <div className="w-[54px] border-r border-b border-[#e4e4e4]" />
        <div className="w-[54px] border-b border-[#e4e4e4]" />
      </div>
      <div className="-ml-px">
        <KpiRow />
      </div>
      <div className="-ml-px flex h-[16px]">
        <div className="w-[45px] border-r border-b border-[#e0e0e0]" />
        <div className="w-[291px] border-r border-[#e8e8e8]" />
        <div className="w-[1115px] border-r border-[#e4e4e4]" />
        <div className="w-[54px] border-b border-[#e4e4e4]" />
      </div>
      <div className="-ml-px flex flex-1">
        <GridStrip className="w-[45px]" />
        <div className="flex w-[470px] flex-col">
          <div className="h-[470px] border border-[#d9d9d9]">
            <PieChart />
            <BarChart />
          </div>
          <div className="flex flex-1">
            <div className="w-[291px] border-r border-l border-[#e4e4e4]" />
          </div>
        </div>
        <GridStrip className="w-[20px]" />
        <EmployeesTable />
        <GridStrip className="w-[54px]" />
      </div>
    </div>
    <div className="flex w-[31px] flex-col bg-[#eeeeee] text-[15px] text-[#222]">
      {ROW_HEADERS.map((row, i) => (
        <div key={i} className={clsx('flex shrink-0 items-center justify-center border-b border-[#bcbcbc] leading-none', row.cls)}>
          {row.n}
        </div>
      ))}
    </div>
  </div>
);

/* ---------- Bottom bars ---------- */

const SheetTabs = () => (
  <div className="flex h-[39px] border-t border-[#b0b0b0] bg-[#eaeaea] text-[16px] text-[#333]">
    <div className="mt-[8px] ml-[24px] flex h-[21px]">
      <div className="flex w-[18px] items-center justify-center border border-[#cfcfcf] bg-white">
        <Svg w={6} h={8}>
          <path d="M5.500 0v8L.5 4z" fill="#555" />
        </Svg>
      </div>
      <div className="ml-px w-[281px] border border-[#cfcfcf] bg-white" />
      <div className="ml-px flex w-[18px] items-center justify-center border border-[#cfcfcf] bg-white">
        <Svg w={6} h={8}>
          <path d="M.5 0v8l5-4z" fill="#555" />
        </Svg>
      </div>
    </div>
    <Svg w={22} h={22} className="mt-[7px] ml-[632px]">
      <circle cx="11" cy="11" r="9.800" stroke="#777" fill="#f4f4f4" />
      <path d="M6.500 11h9M11 6.500v9" stroke="#444" strokeWidth="1.600" />
    </Svg>
    <Svg w={4} h={16} className="mt-[10px] ml-[31px]">
      <path d="M2 0v16" stroke="#bbb" strokeWidth="1.500" strokeDasharray="2 2.500" />
    </Svg>
    <FitText className="ml-[44px] h-[34px] w-[113px]">بيانات الموظفين</FitText>
    <div className="mt-[6px] ml-[17px] h-[24px] w-px bg-[#b5b5b5]" />
    <FitText className="ml-[20px] h-[34px] w-[59px] text-[15px]">ىىلسليمن</FitText>
    <div className="-mt-px ml-[38px] flex h-[36px] w-[114px] items-center justify-center border-x border-b-2 border-x-[#b0b0b0] border-b-[#217346] bg-white text-[#217346]">
      <FitText className="w-[83px] pt-[2px] font-semibold">لوحة التحكم</FitText>
    </div>
    <Svg w={6} h={8} className="mt-[14px] ml-[28px]">
      <path d="M5 0v8L1 4z" fill="#bbb" />
    </Svg>
    <Svg w={6} h={8} className="mt-[14px] ml-[28px]">
      <path d="M1 0v8l4-4z" fill="#bbb" />
    </Svg>
  </div>
);

const ViewIcon = ({ extra }: { extra: string }) => (
  <Svg w={18} h={17}>
    <path d="M.7.7h16.500v15.500H.7zM6 .7v8M12 .7v8M.7 8.500h16.500" stroke="#666" strokeWidth="1.100" />
    <path d={extra} stroke="#666" strokeWidth="1.100" />
  </Svg>
);

const StatusBar = () => (
  <div className="flex h-[31px] items-center bg-[#f2f2f2] text-[#333]">
    <FitText className="ml-[9px] w-[37px] text-[15px]">100%</FitText>
    <Svg w={8} h={6} className="ml-[17px]">
      <path d="M0 4h3l1-3 2 1 2 3" stroke="#777" strokeWidth="1.100" />
    </Svg>
    <div className="ml-[9px] flex w-[137px] items-center">
      <div className="h-px w-[65px] bg-[#b0b0b0]" />
      <div className="h-[15px] w-[6px] bg-[#555]" />
      <div className="h-px w-[66px] bg-[#b0b0b0]" />
    </div>
    <Svg w={10} h={6} className="ml-[8px]">
      <path d="M1 3l3-2v4M1 3h7l1 2" stroke="#777" strokeWidth="1.100" />
    </Svg>
    <div className="flex w-[59px] items-center justify-center pl-[6px]">
      <ViewIcon extra="M6 8v2M12 8v2M3 8v-3" />
    </div>
    <div className="flex h-full w-[47px] items-center justify-center bg-[#c9c9c9]">
      <ViewIcon extra="M6 8v8M12 8v8M6 12h6" />
    </div>
    <div className="flex w-[46px] items-center justify-center">
      <ViewIcon extra="M6 8v8M12 8v8M3 12h4M11 5h4M11 12h3" />
    </div>
    <div className="flex h-full w-[47px] items-center justify-center bg-[#c9c9c9]">
      <ViewIcon extra="M6 8v8M12 8v8" />
    </div>
  </div>
);

const Watermark = () => (
  <div className="pointer-events-none absolute bottom-0 left-[676px] flex h-[104px] w-[186px] flex-col items-center text-[#c9c9c9] opacity-50">
    <FitText className="h-[62px] w-[184px] text-[46px] font-black">نفذلي</FitText>
    <FitText className="mt-[9px] h-[28px] w-[172px] text-[27px] font-semibold">nafezly.com</FitText>
  </div>
);

const App = () => {
  return (
    <div className="relative flex h-[1024px] w-[1536px] flex-col overflow-hidden bg-[#ebebeb] font-['Noto_Sans','Noto_Sans_Arabic',sans-serif]">
      <div className="bg-[#217346]">
        <TitleBar />
        <TabBar />
      </div>
      <Ribbon />
      <FormulaBar />
      <ColumnHeader />
      <Sheet />
      <SheetTabs />
      <StatusBar />
      <Watermark />
    </div>
  );
};

export default App;
